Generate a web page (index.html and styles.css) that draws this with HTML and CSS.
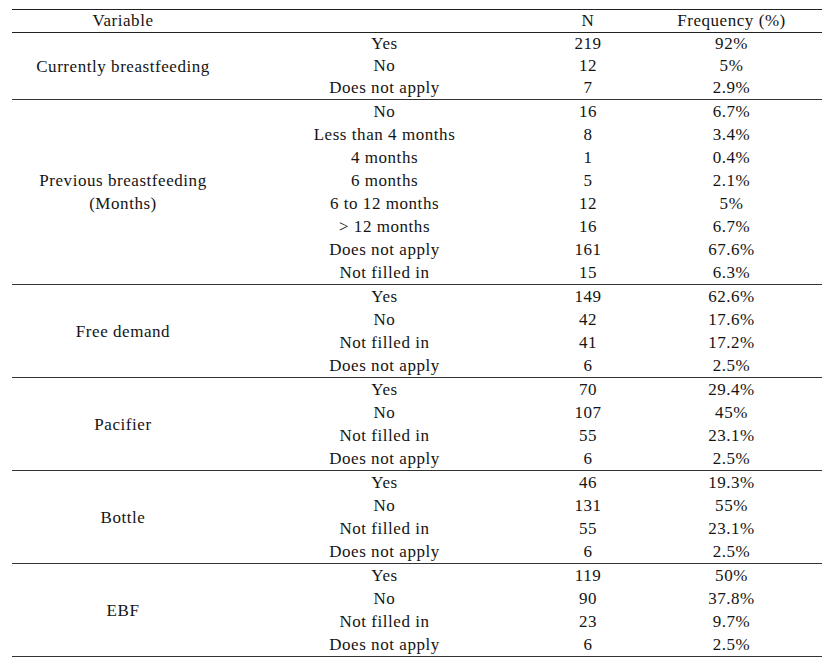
FILE: index.html
```html
<!DOCTYPE html>
<html>
<head>
<meta charset="utf-8">
<link rel="stylesheet" href="styles.css">
</head>
<body>
<table class="data">
  <colgroup>
    <col class="c-var"><col class="c-cat"><col class="c-n"><col class="c-freq">
  </colgroup>
  <thead>
    <tr><th>Variable</th><th></th><th>N</th><th>Frequency (%)</th></tr>
  </thead>
  <tbody class="sec first">
    <tr><td rowspan="3" class="var">Currently breastfeeding</td><td>Yes</td><td>219</td><td>92%</td></tr>
    <tr><td>No</td><td>12</td><td>5%</td></tr>
    <tr><td>Does not apply</td><td>7</td><td>2.9%</td></tr>
  </tbody>
  <tbody class="sec">
    <tr><td rowspan="8" class="var">Previous breastfeeding<br>(Months)</td><td>No</td><td>16</td><td>6.7%</td></tr>
    <tr><td>Less than 4 months</td><td>8</td><td>3.4%</td></tr>
    <tr><td>4 months</td><td>1</td><td>0.4%</td></tr>
    <tr><td>6 months</td><td>5</td><td>2.1%</td></tr>
    <tr><td>6 to 12 months</td><td>12</td><td>5%</td></tr>
    <tr><td>&gt; 12 months</td><td>16</td><td>6.7%</td></tr>
    <tr><td>Does not apply</td><td>161</td><td>67.6%</td></tr>
    <tr><td>Not filled in</td><td>15</td><td>6.3%</td></tr>
  </tbody>
  <tbody class="sec">
    <tr><td rowspan="4" class="var">Free demand</td><td>Yes</td><td>149</td><td>62.6%</td></tr>
    <tr><td>No</td><td>42</td><td>17.6%</td></tr>
    <tr><td>Not filled in</td><td>41</td><td>17.2%</td></tr>
    <tr><td>Does not apply</td><td>6</td><td>2.5%</td></tr>
  </tbody>
  <tbody class="sec">
    <tr><td rowspan="4" class="var">Pacifier</td><td>Yes</td><td>70</td><td>29.4%</td></tr>
    <tr><td>No</td><td>107</td><td>45%</td></tr>
    <tr><td>Not filled in</td><td>55</td><td>23.1%</td></tr>
    <tr><td>Does not apply</td><td>6</td><td>2.5%</td></tr>
  </tbody>
  <tbody class="sec">
    <tr><td rowspan="4" class="var">Bottle</td><td>Yes</td><td>46</td><td>19.3%</td></tr>
    <tr><td>No</td><td>131</td><td>55%</td></tr>
    <tr><td>Not filled in</td><td>55</td><td>23.1%</td></tr>
    <tr><td>Does not apply</td><td>6</td><td>2.5%</td></tr>
  </tbody>
  <tbody class="sec">
    <tr><td rowspan="4" class="var">EBF</td><td>Yes</td><td>119</td><td>50%</td></tr>
    <tr><td>No</td><td>90</td><td>37.8%</td></tr>
    <tr><td>Not filled in</td><td>23</td><td>9.7%</td></tr>
    <tr><td>Does not apply</td><td>6</td><td>2.5%</td></tr>
  </tbody>
</table>
</body>
</html>
```

FILE: styles.css
```css
html, body {
  margin: 0;
  padding: 0;
  background: #ffffff;
}
body {
  padding: 9px 12px 0 12px;
  font-family: "Liberation Serif", "Times New Roman", serif;
  font-size: 17px;
  letter-spacing: 0.55px;
  color: #141414;
}
.data {
  width: 810px;
  border-collapse: collapse;
  table-layout: fixed;
}
.c-var { width: 222px; }
.c-cat { width: 301px; }
.c-n { width: 106px; }
.c-freq { width: 181px; }
.data th,
.data td {
  padding: 0;
  height: 23px;
  line-height: 23px;
  text-align: center;
  vertical-align: middle;
  font-weight: normal;
  white-space: nowrap;
}
.data thead tr {
  border-top: 1px solid #222;
  border-bottom: 1px solid #222;
}
.data thead th {
  height: 21px;
  line-height: 22px;
}
.sec {
  border-bottom: 1px solid #333;
}
.sec tr:last-child td {
  height: 22px;
}
.sec.first td {
  height: 22px;
  line-height: 22px;
}
.data td.var {
  line-height: 23px;
}
```
